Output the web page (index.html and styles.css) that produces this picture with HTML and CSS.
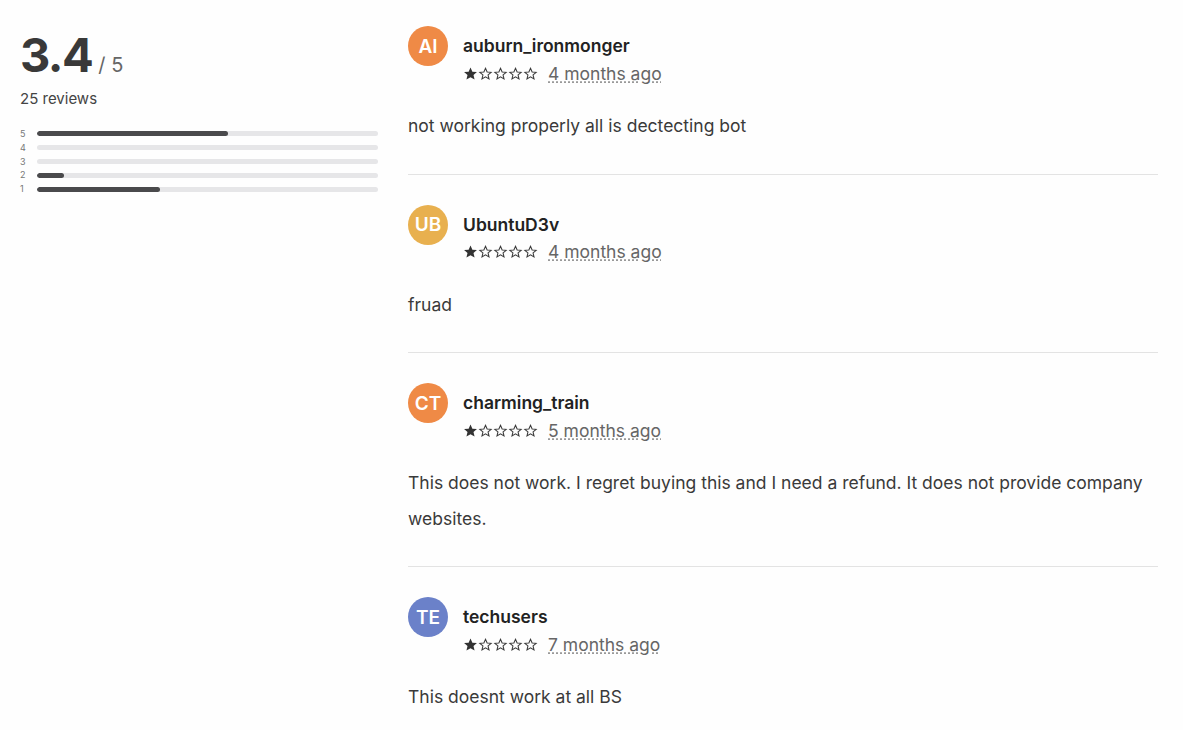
FILE: index.html
```html
<!DOCTYPE html>
<html>
<head>
<meta charset="utf-8">
<link rel="stylesheet" href="styles.css">
</head>
<body>
<svg width="0" height="0" class="defs">
  <defs>
    <symbol id="sf" viewBox="0 0 24 24"><path d="M12 2.2l3 6.8 7.3.6-5.5 4.8 1.7 7.2L12 17.8l-6.5 3.8 1.7-7.2-5.5-4.8 7.3-.6z" fill="#333"/></symbol>
    <symbol id="se" viewBox="0 0 24 24"><path d="M12 3.6l2.6 6 6.4.5-4.9 4.2 1.5 6.3L12 17.2l-5.6 3.4 1.5-6.3-4.9-4.2 6.4-.5z" fill="none" stroke="#3c3c3c" stroke-width="1.7" stroke-linejoin="miter"/></symbol>
  </defs>
</svg>
<div class="page">
  <aside class="summary">
    <div class="score"><span class="big">3.4</span><span class="outof">/ 5</span></div>
    <div class="count">25 reviews</div>
    <div class="dist">
      <div class="row"><span class="lbl">5</span><div class="track"><div class="fill" style="width:56%"></div></div></div>
      <div class="row"><span class="lbl">4</span><div class="track"><div class="fill" style="width:0%"></div></div></div>
      <div class="row"><span class="lbl">3</span><div class="track"><div class="fill" style="width:0%"></div></div></div>
      <div class="row"><span class="lbl">2</span><div class="track"><div class="fill" style="width:8%"></div></div></div>
      <div class="row"><span class="lbl">1</span><div class="track"><div class="fill" style="width:36%"></div></div></div>
    </div>
  </aside>
  <main class="reviews">
    <article class="review">
      <div class="head">
        <div class="avatar orange">AI</div>
        <div class="meta">
          <div class="name">auburn_ironmonger</div>
          <div class="rate">
            <span class="stars"><svg><use href="#sf"/></svg><svg><use href="#se"/></svg><svg><use href="#se"/></svg><svg><use href="#se"/></svg><svg><use href="#se"/></svg></span>
            <span class="date">4 months ago</span>
          </div>
        </div>
      </div>
      <p class="body">not working properly all is dectecting bot</p>
    </article>
    <article class="review">
      <div class="head">
        <div class="avatar gold">UB</div>
        <div class="meta">
          <div class="name">UbuntuD3v</div>
          <div class="rate">
            <span class="stars"><svg><use href="#sf"/></svg><svg><use href="#se"/></svg><svg><use href="#se"/></svg><svg><use href="#se"/></svg><svg><use href="#se"/></svg></span>
            <span class="date">4 months ago</span>
          </div>
        </div>
      </div>
      <p class="body">fruad</p>
    </article>
    <article class="review">
      <div class="head">
        <div class="avatar orange">CT</div>
        <div class="meta">
          <div class="name">charming_train</div>
          <div class="rate">
            <span class="stars"><svg><use href="#sf"/></svg><svg><use href="#se"/></svg><svg><use href="#se"/></svg><svg><use href="#se"/></svg><svg><use href="#se"/></svg></span>
            <span class="date">5 months ago</span>
          </div>
        </div>
      </div>
      <p class="body">This does not work. I regret buying this and I need a refund. It does not provide company websites.</p>
    </article>
    <article class="review">
      <div class="head">
        <div class="avatar blue">TE</div>
        <div class="meta">
          <div class="name">techusers</div>
          <div class="rate">
            <span class="stars"><svg><use href="#sf"/></svg><svg><use href="#se"/></svg><svg><use href="#se"/></svg><svg><use href="#se"/></svg><svg><use href="#se"/></svg></span>
            <span class="date">7 months ago</span>
          </div>
        </div>
      </div>
      <p class="body">This doesnt work at all BS</p>
    </article>
  </main>
</div>
</body>
</html>
```
FILE: styles.css
```css
html, body {
  margin: 0;
  padding: 0;
  background: #fefefe;
  font-family: Inter, "Noto Sans", sans-serif;
  color: #3a3a3a;
  overflow: hidden;
}
.defs { position: absolute; }
.page {
  display: flex;
  gap: 30px;
  padding: 26px 25px 0 20px;
  height: 730px;
  box-sizing: border-box;
  overflow: hidden;
}
.summary {
  width: 358px;
  flex: none;
}
.score {
  display: flex;
  align-items: baseline;
  gap: 6px;
  height: 58px;
}
.big {
  font-size: 47px;
  font-weight: 700;
  line-height: 58px;
  color: #393939;
  letter-spacing: -1.5px;
}
.outof {
  font-size: 20px;
  color: #666;
}
.count {
  font-size: 15px;
  color: #444;
  margin-top: 5px;
  line-height: 20px;
}
.dist {
  margin-top: 20px;
  display: flex;
  flex-direction: column;
  gap: 4px;
}
.row {
  display: flex;
  align-items: center;
  height: 9.8px;
}
.lbl {
  width: 17px;
  font-size: 9px;
  color: #777;
  line-height: 10px;
}
.track {
  flex: 1;
  height: 5px;
  border-radius: 3px;
  background: #e6e6e8;
  overflow: hidden;
}
.fill {
  height: 100%;
  background: #4a4a4c;
  border-radius: 3px;
}
.reviews {
  flex: 1;
}
.review {
  border-bottom: 1px solid #e3e3e3;
  padding-bottom: 30px;
  margin-bottom: 30px;
}
.head {
  display: flex;
  gap: 15px;
}
.avatar {
  width: 40px;
  height: 40px;
  border-radius: 50%;
  color: #fff;
  font-weight: 600;
  font-size: 19px;
  display: flex;
  align-items: center;
  justify-content: center;
  flex: none;
}
.orange { background: #ef8a46; }
.gold { background: #e8b04f; }
.blue { background: #6b81c9; }
.meta {
  display: flex;
  flex-direction: column;
}
.name {
  font-size: 17.5px;
  font-weight: 600;
  color: #222;
  line-height: 20px;
  margin-top: 10px;
}
.rate {
  display: flex;
  align-items: center;
  gap: 10px;
  margin-top: 7px;
  height: 20px;
}
.stars {
  display: flex;
  gap: 0;
}
.stars svg {
  width: 15px;
  height: 15px;
}
.date {
  font-size: 17.5px;
  color: #666;
  text-decoration: underline dotted #999;
  text-underline-offset: 2px;
}
.body {
  margin: 25px 0 0;
  font-size: 17.5px;
  line-height: 35.5px;
  color: #3a3a3a;
}
```
